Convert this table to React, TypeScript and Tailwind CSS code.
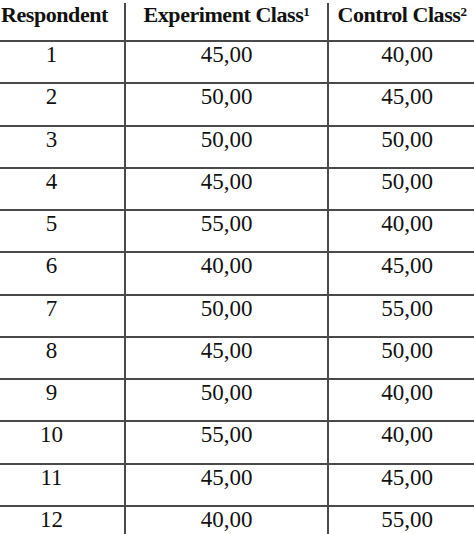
const rows: [string, string, string][] = [
  ["1", "45,00", "40,00"],
  ["2", "50,00", "45,00"],
  ["3", "50,00", "50,00"],
  ["4", "45,00", "50,00"],
  ["5", "55,00", "40,00"],
  ["6", "40,00", "45,00"],
  ["7", "50,00", "55,00"],
  ["8", "45,00", "50,00"],
  ["9", "50,00", "40,00"],
  ["10", "55,00", "40,00"],
  ["11", "45,00", "45,00"],
  ["12", "40,00", "55,00"],
];

const font = { fontFamily: '"Liberation Serif", "Times New Roman", serif' };

export default function App() {
  return (
    <div
      className="h-[534px] w-[474px] overflow-hidden bg-white text-[#111]"
      style={font}
    >
      <div className="-ml-[21px] w-[506px]">
        <div className="flex h-[40px] pt-[3px] text-[22px] font-bold leading-6 tracking-[-0.02em]">
          <div className="w-[147px] border-r-2 border-[#4a4a4a] pl-[22px] pr-[16px] text-center">
            Respondent
          </div>
          <div className="w-[203px] border-r-2 border-[#4a4a4a] text-center">
            Experiment Class<sup className="text-[13px]">1</sup>
          </div>
          <div className="w-[156px] pr-[10px] text-center">
            Control Class<sup className="text-[13px]">2</sup>
          </div>
        </div>
        {rows.map(([r, e, c]) => (
          <div
            key={r}
            className="flex h-[42.27px] border-t-2 border-[#4a4a4a] text-[23px] leading-6"
          >
            <div className="w-[147px] border-r-2 border-[#4a4a4a] pt-[1px] text-center">{r}</div>
            <div className="w-[203px] border-r-2 border-[#4a4a4a] pt-[1px] text-center">{e}</div>
            <div className="w-[156px] pt-[1px] text-center">{c}</div>
          </div>
        ))}
      </div>
    </div>
  );
}
